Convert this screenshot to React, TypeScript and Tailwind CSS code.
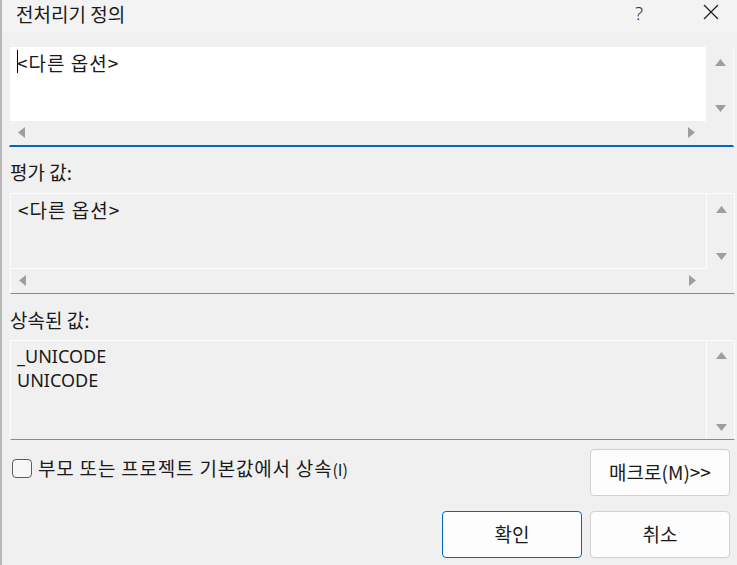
import React from "react";

const KR = { fontFamily: '"Noto Sans CJK KR", "Noto Sans", sans-serif' };

function Tri({ dir }: { dir: "up" | "down" | "left" | "right" }) {
  const pts =
    dir === "up"
      ? "0,7 5.5,0 11,7"
      : dir === "down"
      ? "0,0 11,0 5.5,7"
      : dir === "left"
      ? "7,0 7,11 0,5.5"
      : "0,0 0,11 7,5.5";
  const w = dir === "up" || dir === "down" ? 11 : 7;
  const h = dir === "up" || dir === "down" ? 7 : 11;
  return (
    <svg width={w} height={h} viewBox={`0 0 ${w} ${h}`}>
      <polygon points={pts} fill="#9e9e9e" />
    </svg>
  );
}

function Box({ lines, variant }: { lines: string[]; variant: "edit" | "ro" }) {
  const isEdit = variant === "edit";
  return (
    <div
      className={
        "w-[725px] h-[101px] grid grid-cols-[1fr_27px] grid-rows-[1fr_24px] " +
        (isEdit
          ? "border-t border-t-[#f0f0f0] border-l border-l-[#f0f0f0] border-r border-r-[#fbfbfb] border-b-2 border-b-[#0067c0] bg-[#f0f0f0]"
          : "border border-[#fdfdfd] border-b-[#8a8a8a] bg-[#f0f0f0]")
      }
    >
      <div
        className={
          "relative pl-[7px] pt-[4px] text-[19px] leading-[24px] tracking-[1px] text-[#1a1a1a] " +
          (isEdit ? "bg-white" : "border-r border-b border-[#fdfdfd]")
        }
        style={KR}
      >
        {isEdit && <span className="absolute left-[7px] top-[3px] w-px h-[23px] bg-black" />}
        {lines.map((l, i) => (
          <div key={i}>{l}</div>
        ))}
      </div>
      <div className="flex flex-col items-center justify-between pt-[12px] pb-[9px] pl-[1px]">
        <Tri dir="up" />
        <Tri dir="down" />
      </div>
      <div className="flex items-center justify-between pl-[8px] pr-[11px] pb-[1px]">
        <Tri dir="left" />
        <Tri dir="right" />
      </div>
      <div />
    </div>
  );
}

export default function App() {
  return (
    <div className="w-[737px] h-[565px] flex bg-[#f0f0f0] overflow-hidden" style={KR}>
      <div className="w-[2px] h-full bg-[#b8b8b8] shrink-0" />
      <div className="flex-1 flex flex-col">
        <div className="h-[33px] bg-[#f3f3f3] flex items-start relative shrink-0">
          <span className="ml-[14px] text-[19px] leading-[28px] text-[#1c1c1c]">전처리기 정의</span>
          <span
            className="absolute left-[633px] top-[0px] text-[19px] leading-[26px] text-[#333]"
            style={{ fontFamily: '"Noto Sans", sans-serif', fontWeight: 300 }}
          >
            ?
          </span>
          <svg className="absolute left-[701px] top-[4px]" width="16" height="16" viewBox="0 0 16 16">
            <path d="M1 1 L15 15 M15 1 L1 15" stroke="#222" strokeWidth="1.3" />
          </svg>
        </div>
        <div className="pl-[7px] pt-[13px]">
          <Box lines={["<다른 옵션>"]} variant="edit" />
        </div>
        <div className="pl-[8px] h-[46px] flex items-center text-[19px] text-[#1a1a1a] pt-[4px]">평가 값:</div>
        <div className="pl-[8px]">
          <Box lines={["<다른 옵션>"]} variant="ro" />
        </div>
        <div className="pl-[8px] h-[46px] flex items-center text-[19px] text-[#1a1a1a] pt-[6px]">상속된 값:</div>
        <div className="pl-[8px]">
          <div className="w-[725px] h-[100px] grid grid-cols-[1fr_27px] border border-[#fdfdfd] border-b-[#8a8a8a] bg-[#f0f0f0]">
            <div
              className="pl-[6px] pt-[3px] text-[18px] leading-[24px] text-[#1a1a1a] border-r border-[#fdfdfd]"
              style={{ fontFamily: '"Noto Sans", "Noto Sans CJK KR", sans-serif' }}
            >
              <div>_UNICODE</div>
              <div>UNICODE</div>
            </div>
            <div className="flex flex-col items-center justify-between pt-[11px] pb-[8px] pl-[1px]">
              <Tri dir="up" />
              <Tri dir="down" />
            </div>
          </div>
        </div>
        <div className="flex items-start mt-[9px] pl-[10px]">
          <div className="flex items-center mt-[7px]">
            <div className="w-[20px] h-[19px] rounded-[4px] border border-[#5c5c5c] bg-[#f7f7f7]" />
            <span className="ml-[6px] text-[19px] leading-[24px] tracking-[0.8px] text-[#1a1a1a]">
              부모 또는 프로젝트 기본값에서 상속<span className="text-[16px] tracking-normal">(I)</span>
            </span>
          </div>
          <button className="ml-auto mr-[7px] w-[140px] h-[47px] rounded-[4px] border border-[#d0d0d0] bg-[#fdfdfd] text-[19px] text-[#1a1a1a]">
            매크로(M)&gt;&gt;
          </button>
        </div>
        <div className="flex justify-end gap-[8px] mt-[15px] mr-[7px]">
          <button className="w-[140px] h-[47px] rounded-[4px] border border-[#0067c0] bg-[#fdfdfd] text-[19px] text-[#1a1a1a]">
            확인
          </button>
          <button className="w-[140px] h-[47px] rounded-[4px] border border-[#d0d0d0] bg-[#fdfdfd] text-[19px] text-[#1a1a1a]">
            취소
          </button>
        </div>
      </div>
    </div>
  );
}
